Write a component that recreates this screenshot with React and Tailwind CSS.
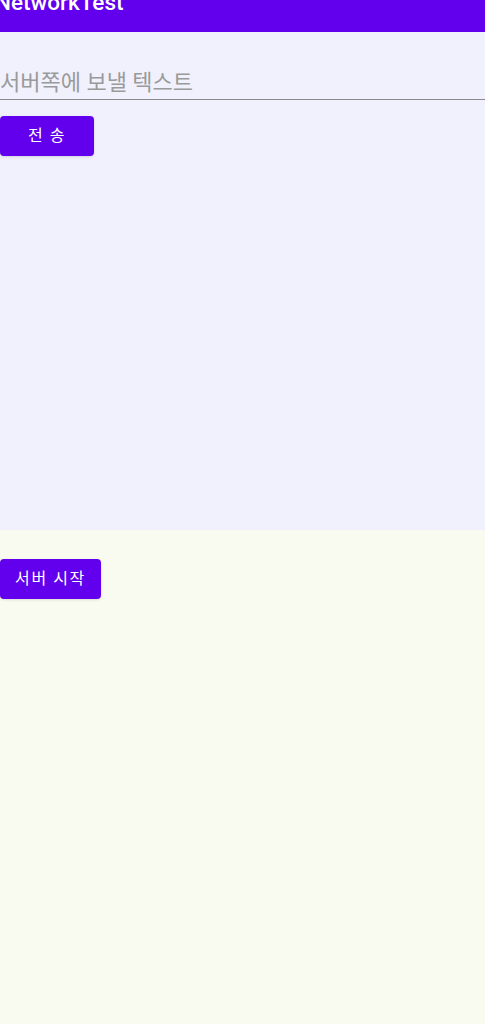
import React, { useState } from "react";

const font = { fontFamily: "Roboto, 'Noto Sans CJK KR', sans-serif" };

export default function App() {
  const [text, setText] = useState("");

  return (
    <div className="w-[485px] h-[1024px] flex flex-col overflow-hidden" style={font}>
      <div className="h-[32px] shrink-0 bg-[#6200ee] overflow-hidden">
        <div className="-mt-[11px] -ml-[5px] text-[22.5px] leading-[26px] font-medium text-white">NetworkTest</div>
      </div>
      <div className="h-[498px] shrink-0 bg-[#f0f1fd] flex flex-col items-start">
        <input
          value={text}
          onChange={(e) => setText(e.target.value)}
          placeholder="서버쪽에 보낼 텍스트"
          className="mt-[34px] w-full h-[34px] bg-transparent border-b border-[#8a8a8a] text-[22px] text-[#333] placeholder:text-[#9a9a9a] outline-none"
          style={font}
        />
        <button className="mt-[16px] w-[94px] h-[40px] rounded-[4px] bg-[#6200ee] text-white text-[16px] tracking-[0.1em] shadow-sm">
          전 송
        </button>
      </div>
      <div className="flex-1 bg-[#fafbf0] flex flex-col items-start">
        <button className="mt-[29px] w-[101px] h-[40px] rounded-[4px] bg-[#6200ee] text-white text-[16px] tracking-[0.1em] shadow-sm">
          서버 시작
        </button>
      </div>
    </div>
  );
}
